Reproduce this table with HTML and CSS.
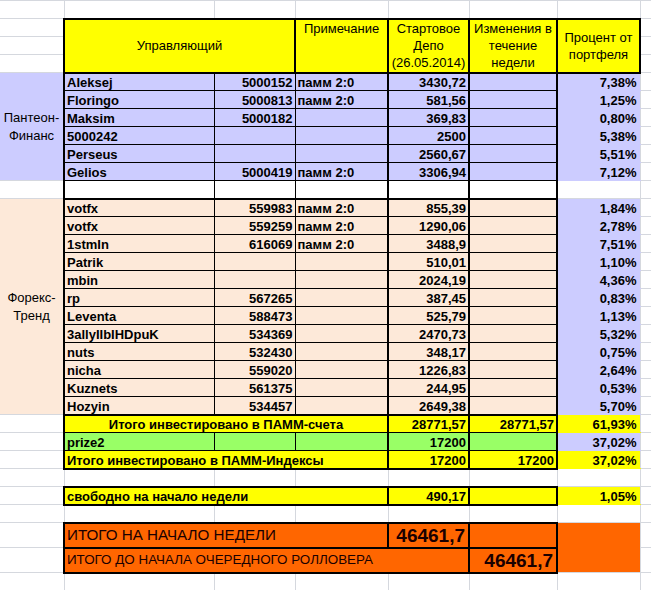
FILE: index.html
```html
<!DOCTYPE html>
<html>
<head>
<meta charset="utf-8">
<link rel="stylesheet" href="styles.css">
</head>
<body>
<table class="sheet">
<colgroup><col class="cA"><col class="cB"><col class="cC"><col class="cD"><col class="cE"><col class="cF"><col class="cG"><col class="cH"></colgroup>
<tr><td class="a"></td><td></td><td></td><td></td><td></td><td></td><td></td><td></td></tr>
<tr><td class="a"></td><td class="hd" colspan="2" rowspan="3">Управляющий</td><td class="hd top" rowspan="3">Примечание</td><td class="hd" rowspan="3">Стартовое<br>Депо<br>(26.05.2014)</td><td class="hd" rowspan="3">Изменения в<br>течение<br>недели</td><td class="hd" rowspan="3">Процент от<br>портфеля</td><td></td></tr>
<tr><td class="a"></td><td></td></tr>
<tr><td class="a"></td><td></td></tr>

<tr class="pb"><td class="grp" rowspan="6">Пантеон-<br>Финанс</td><td class="nm">Aleksej</td><td class="ac">5000152</td><td class="nt">памм 2:0</td><td class="sd">3430,72</td><td class="ch"></td><td class="pc">7,38%</td><td class="h"></td></tr>
<tr class="pb"><td class="nm">Floringo</td><td class="ac">5000813</td><td class="nt">памм 2:0</td><td class="sd">581,56</td><td class="ch"></td><td class="pc">1,25%</td><td class="h"></td></tr>
<tr class="pb"><td class="nm">Maksim</td><td class="ac">5000182</td><td class="nt"></td><td class="sd">369,83</td><td class="ch"></td><td class="pc">0,80%</td><td class="h"></td></tr>
<tr class="pb"><td class="nm">5000242</td><td class="ac"></td><td class="nt"></td><td class="sd">2500</td><td class="ch"></td><td class="pc">5,38%</td><td class="h"></td></tr>
<tr class="pb"><td class="nm">Perseus</td><td class="ac"></td><td class="nt"></td><td class="sd">2560,67</td><td class="ch"></td><td class="pc">5,51%</td><td class="h"></td></tr>
<tr class="pb"><td class="nm">Gelios</td><td class="ac">5000419</td><td class="nt">памм 2:0</td><td class="sd">3306,94</td><td class="ch"></td><td class="pc">7,12%</td><td class="h"></td></tr>

<tr class="gap"><td class="a"></td><td class="nm"></td><td class="ac"></td><td class="nt"></td><td class="sd"></td><td class="ch"></td><td></td><td></td></tr>

<tr class="pp"><td class="grp" rowspan="12">Форекс-<br>Тренд</td><td class="nm">votfx</td><td class="ac">559983</td><td class="nt">памм 2:0</td><td class="sd">855,39</td><td class="ch"></td><td class="pc">1,84%</td><td class="h"></td></tr>
<tr class="pp"><td class="nm">votfx</td><td class="ac">559259</td><td class="nt">памм 2:0</td><td class="sd">1290,06</td><td class="ch"></td><td class="pc">2,78%</td><td class="h"></td></tr>
<tr class="pp"><td class="nm">1stmIn</td><td class="ac">616069</td><td class="nt">памм 2:0</td><td class="sd">3488,9</td><td class="ch"></td><td class="pc">7,51%</td><td class="h"></td></tr>
<tr class="pp"><td class="nm">Patrik</td><td class="ac"></td><td class="nt"></td><td class="sd">510,01</td><td class="ch"></td><td class="pc">1,10%</td><td class="h"></td></tr>
<tr class="pp"><td class="nm">mbin</td><td class="ac"></td><td class="nt"></td><td class="sd">2024,19</td><td class="ch"></td><td class="pc">4,36%</td><td class="h"></td></tr>
<tr class="pp"><td class="nm">rp</td><td class="ac">567265</td><td class="nt"></td><td class="sd">387,45</td><td class="ch"></td><td class="pc">0,83%</td><td class="h"></td></tr>
<tr class="pp"><td class="nm">Leventa</td><td class="ac">588473</td><td class="nt"></td><td class="sd">525,79</td><td class="ch"></td><td class="pc">1,13%</td><td class="h"></td></tr>
<tr class="pp"><td class="nm">3allyIIbIHDpuK</td><td class="ac">534369</td><td class="nt"></td><td class="sd">2470,73</td><td class="ch"></td><td class="pc">5,32%</td><td class="h"></td></tr>
<tr class="pp"><td class="nm">nuts</td><td class="ac">532430</td><td class="nt"></td><td class="sd">348,17</td><td class="ch"></td><td class="pc">0,75%</td><td class="h"></td></tr>
<tr class="pp"><td class="nm">nicha</td><td class="ac">559020</td><td class="nt"></td><td class="sd">1226,83</td><td class="ch"></td><td class="pc">2,64%</td><td class="h"></td></tr>
<tr class="pp"><td class="nm">Kuznets</td><td class="ac">561375</td><td class="nt"></td><td class="sd">244,95</td><td class="ch"></td><td class="pc">0,53%</td><td class="h"></td></tr>
<tr class="pp last"><td class="nm">Hozyin</td><td class="ac">534457</td><td class="nt"></td><td class="sd">2649,38</td><td class="ch"></td><td class="pc">5,70%</td><td class="h"></td></tr>

<tr class="py sum1"><td class="a"></td><td class="nm mid" colspan="3">Итого инвестировано в ПАММ-счета</td><td class="sd">28771,57</td><td class="ch">28771,57</td><td class="pc">61,93%</td><td class="h"></td></tr>
<tr class="pg"><td class="a"></td><td class="nm">prize2</td><td class="ac"></td><td class="nt"></td><td class="sd">17200</td><td class="ch"></td><td class="pc pcb">37,02%</td><td class="h"></td></tr>
<tr class="py sum2"><td class="a"></td><td class="nm" colspan="3">Итого инвестировано в ПАММ-Индексы</td><td class="sd">17200</td><td class="ch">17200</td><td class="pc">37,02%</td><td class="h"></td></tr>

<tr><td class="a"></td><td></td><td></td><td></td><td></td><td></td><td></td><td></td></tr>

<tr class="py free"><td class="a"></td><td class="nm" colspan="3">свободно на начало недели</td><td class="sd">490,17</td><td class="ch"></td><td class="pc">1,05%</td><td class="h"></td></tr>

<tr><td class="a"></td><td></td><td></td><td></td><td></td><td></td><td></td><td></td></tr>

<tr class="po"><td class="a"></td><td class="ol ol1" colspan="3">ИТОГО НА НАЧАЛО НЕДЕЛИ</td><td class="ob">46461,7</td><td class="ob"></td><td class="og" rowspan="2"></td><td class="h"></td></tr>
<tr class="po"><td class="a"></td><td class="ol" colspan="4">ИТОГО ДО НАЧАЛА ОЧЕРЕДНОГО РОЛЛОВЕРА</td><td class="ob">46461,7</td><td class="h"></td></tr>

<tr><td class="a"></td><td></td><td></td><td></td><td></td><td></td><td></td><td></td></tr>
</table>
</body>
</html>
```

FILE: styles.css
```css
html, body {
  margin: 0;
  padding: 0;
  background: #fff;
  overflow: hidden;
  color: #000;
}
body {
  width: 651px;
  height: 590px;
}
.sheet {
  border-collapse: collapse;
  table-layout: fixed;
  width: 651px;
  font-family: "Liberation Sans", Arial, sans-serif;
  font-size: 13px;
  color: #000;
}
.cA { width: 64px; }
.cB { width: 150px; }
.cC { width: 81px; }
.cD { width: 93px; }
.cE { width: 81px; }
.cF { width: 88px; }
.cG { width: 83px; }
.cH { width: 11px; }

.sheet tr { height: 18px; }
.sheet td {
  border: 1px solid #d5d8de;
  padding: 0 2px;
  line-height: 15px;
  vertical-align: bottom;
  white-space: nowrap;
  overflow: hidden;
  background: #fff;
  color: #000;
}
.sheet td.a { border-left: 0; }

/* header */
.sheet td.hd {
  background: #ffff00;
  border: 2px solid #000;
  text-align: center;
  vertical-align: middle;
  white-space: normal;
  line-height: 17px;
}
.sheet td.top { vertical-align: top; }

/* group labels in column A */
.sheet td.grp {
  border-left: 0;
  text-align: center;
  vertical-align: middle;
  white-space: normal;
  line-height: 18px;
}

/* data cells */
.sheet td.nm,
.sheet td.ac,
.sheet td.nt,
.sheet td.sd,
.sheet td.ch {
  border: 1px solid #000;
  font-weight: bold;
}
.sheet td.nm { border-left: 2px solid #000; }
.sheet td.sd { border-left: 2px solid #000; border-right: 2px solid #000; }
.sheet td.ch { border-right: 2px solid #000; }
.sheet td.ac,
.sheet td.sd,
.sheet td.ch { text-align: right; }
.sheet td.mid { text-align: center; }
.sheet td.pc {
  text-align: right;
  font-weight: bold;
  padding-right: 3px;
}

/* fills */
.pb td { background: #ccccff; }
.pp td { background: #fde9d9; }
.py td { background: #ffff00; }
.pg td { background: #99ff66; }
.sheet .pb td.pc,
.sheet .pp td.pc,
.sheet td.pcb {
  background: #ccccff;
  border-top-color: #ccccff;
  border-bottom-color: #ccccff;
}
.sheet .py td.pc {
  background: #ffff00;
  border-top-color: #ffff00;
  border-bottom-color: #ffff00;
}
.sheet td.h { background: #fff; }
.sheet td.a { background: #fff; }

/* thick separators */
.gap td.nm, .gap td.ac, .gap td.nt, .gap td.sd, .gap td.ch { border-bottom: 2px solid #000; }
.last td.nm, .last td.ac, .last td.nt, .last td.sd, .last td.ch { border-bottom: 2px solid #000; }
.sum1 td.nm, .sum1 td.sd, .sum1 td.ch { border-top: 2px solid #000; }
.sum2 td.nm, .sum2 td.sd, .sum2 td.ch { border-bottom: 2px solid #000; }
.free td.nm, .free td.sd, .free td.ch { border-top: 2px solid #000; border-bottom: 2px solid #000; }

/* orange totals */
.sheet tr.po { height: 25px; }
.sheet .po td.ol,
.sheet .po td.ob,
.sheet .po td.og {
  background: #ff6600;
}
.sheet .po td.ol,
.sheet .po td.ob {
  border: 2px solid #000;
  color: #1a0000;
}
.sheet .po td.ol {
  font-size: 13.4px;
  vertical-align: middle;
  line-height: 18px;
}
.sheet .po td.ol1 {
  font-size: 15.2px;
}
.sheet .po td.ob {
  font-size: 19px;
  font-weight: bold;
  text-align: right;
  line-height: 22px;
  padding-right: 3px;
}
.sheet .po td.og {
  border-top-color: #ff6600;
  border-bottom-color: #d5d8de;
}
```
